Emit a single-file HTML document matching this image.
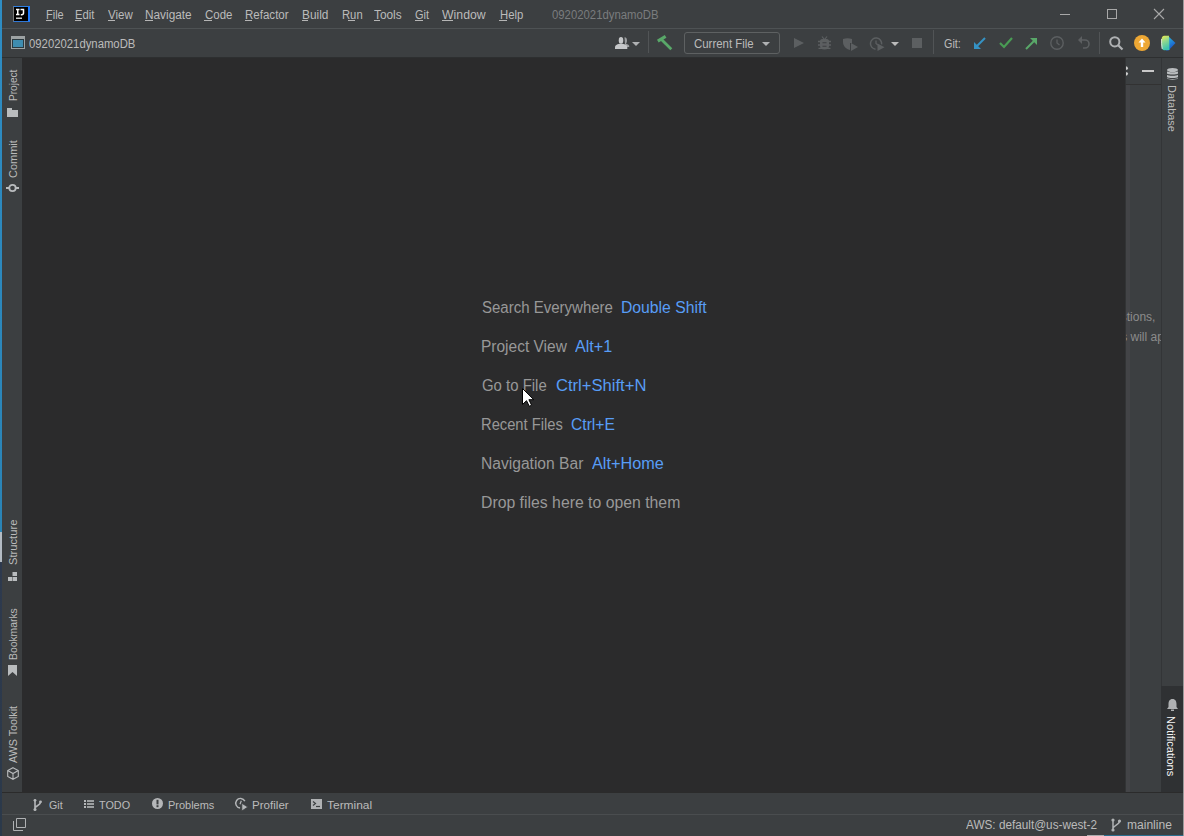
<!DOCTYPE html>
<html><head><meta charset="utf-8">
<style>
*{margin:0;padding:0;box-sizing:border-box}
html,body{width:1184px;height:836px;overflow:hidden;background:#3C3F41;font-family:"Liberation Sans",sans-serif;position:relative}
.a{position:absolute}
.t{position:absolute;white-space:nowrap;line-height:1;transform-origin:0 0}
svg{position:absolute;overflow:visible}
</style></head><body>
<!-- frame -->
<div class="a" style="left:0;top:0;width:1184px;height:28px;background:#3C3F41"></div>
<div class="a" style="left:0;top:28px;width:1184px;height:1px;background:#4E5254"></div>
<div class="a" style="left:0;top:29px;width:1184px;height:28px;background:#3C3F41"></div>
<div class="a" style="left:0;top:57px;width:1184px;height:1px;background:#2D2F30"></div>
<div class="a" style="left:0;top:58px;width:22px;height:734px;background:#3C3F41"></div>
<div class="a" style="left:22px;top:58px;width:1103px;height:734px;background:#2B2B2C"></div>
<div class="a" style="left:1125px;top:58px;width:36px;height:734px;background:#3C3F41"></div>
<div class="a" style="left:1125px;top:58px;width:1px;height:734px;background:#323435"></div>
<div class="a" style="left:1126px;top:85px;width:4px;height:707px;background:#434447"></div>
<div class="a" style="left:1125px;top:84px;width:36px;height:1px;background:#323232"></div>
<div class="a" style="left:1161px;top:58px;width:1px;height:734px;background:#333537"></div>
<div class="a" style="left:1162px;top:58px;width:21px;height:734px;background:#3C3F41"></div>
<div class="a" style="left:1161px;top:686px;width:22px;height:106px;background:#2F3133"></div>
<div class="a" style="left:0;top:792px;width:1184px;height:1px;background:#2B2B2B"></div>
<div class="a" style="left:0;top:793px;width:1184px;height:21px;background:#3C3F41"></div>
<div class="a" style="left:0;top:814px;width:1184px;height:1px;background:#4A4D4F"></div>
<div class="a" style="left:0;top:815px;width:1184px;height:21px;background:#3C3F41"></div>
<div class="a" style="left:0;top:0;width:2px;height:836px;background:linear-gradient(#2E8DC4 0,#2A84B6 532px,#B3BBC3 532px,#B3BBC3 562px,#2E3A4E 562px,#2B394A 836px)"></div>
<div class="a" style="left:1183px;top:0;width:1px;height:836px;background:#9A9A9A"></div>

<div class="a" style="left:1087px;top:835px;width:17px;height:1px;background:#A9ABAD"></div>
<div class="a" style="left:1104px;top:835px;width:79px;height:1px;background:#2C6E8E"></div>
<!-- IJ logo -->
<div class="a" style="left:13px;top:6px;width:17px;height:16px;background:#000;border-right:2px solid #1E7BFF;border-bottom:1px solid #2F78D8;border-top:1px solid #2F7FE0;border-left:1px solid #777"></div>
<svg style="left:15px;top:8px" width="11" height="12" viewBox="0 0 11 12"><path d="M1 1.5H4.5M2.75 1.5V6.5M1 6.5H4.5" stroke="#fff" stroke-width="1.5" fill="none"/><path d="M5.5 1.5H9.2M8.5 1.5V5Q8.5 6.7 6.6 6.7H5.8" stroke="#fff" stroke-width="1.5" fill="none"/><path d="M1 10.2H7" stroke="#fff" stroke-width="1.2"/></svg>
<!-- window controls -->
<div class="a" style="left:1060px;top:14px;width:10px;height:1px;background:#A8A8A8"></div>
<div class="a" style="left:1107px;top:9px;width:10px;height:10px;border:1px solid #A8A8A8"></div>
<svg style="left:1154px;top:9px" width="10" height="10"><path d="M0 0L10 10M10 0L0 10" stroke="#A8A8A8" stroke-width="1.1"/></svg>

<!-- project icon -->
<div class="a" style="left:11px;top:36px;width:14px;height:13px;background:#9DA2A3"></div>
<div class="a" style="left:12px;top:39px;width:12px;height:9px;background:#2B3A40"></div>
<div class="a" style="left:13px;top:40px;width:10px;height:7px;background:#3F8DB0"></div>
<!-- toolbar icons -->
<svg style="left:615px;top:37px" width="15" height="12" viewBox="0 0 15 12"><path d="M9.5 0.2C11.5 0.2 12 2 12 3.5C12 5 11.5 6 11 6.7C13 7.2 14.2 8 14.2 9V10H12L10 7.5Z" fill="#9C9EA0"/><ellipse cx="6" cy="3.4" rx="2.6" ry="3.4" fill="#2F3132"/><ellipse cx="6" cy="3.4" rx="2.3" ry="3.3" fill="#C5C7C9"/><path d="M0 12V10.5C0 8 2.5 6.8 6 6.8S12.3 8 12.3 10.5V12Z" fill="#C5C7C9"/></svg>
<svg style="left:632px;top:42px" width="8" height="4"><path d="M0 0H8L4 4Z" fill="#AFB1B3"/></svg>
<div class="a" style="left:648px;top:31px;width:1px;height:22px;background:#515456"></div>
<svg style="left:657px;top:36px" width="16" height="15" viewBox="0 0 16 15"><path d="M0.8 5.2L8.6 0.4" stroke="#59A869" stroke-width="3.2"/><path d="M4 3L14.3 13.2" stroke="#59A869" stroke-width="2.8"/></svg>
<div class="a" style="left:684px;top:32px;width:96px;height:22px;border:1px solid #5E6162;border-radius:3px"></div>
<svg style="left:762px;top:42px" width="8" height="4"><path d="M0 0H8L4 4Z" fill="#AFB1B3"/></svg>
<svg style="left:794px;top:38px" width="10" height="10"><path d="M0 0L10 5L0 10Z" fill="#5C5F61"/></svg>
<svg style="left:818px;top:36px" width="13" height="14" viewBox="0 0 13 14"><path d="M4 0.5L6 3M9 0.5L7 3" stroke="#5C5F61" stroke-width="1.2"/><path d="M2 5Q2 2.8 6.5 2.8Q11 2.8 11 5V10Q11 13.5 6.5 13.5Q2 13.5 2 10Z" fill="#5C5F61"/><path d="M0 5.5H13M0 9H13M0.5 12.3H12.5" stroke="#5C5F61" stroke-width="1.3"/><path d="M4.5 6.7H8.5M4.5 10.2H8.5" stroke="#3C3F41" stroke-width="1.1"/></svg>
<svg style="left:843px;top:38px" width="15" height="13" viewBox="0 0 15 13"><path d="M0 1C3 0 6 0 9 1V5L7 5V12C3 11 0 8 0 4Z" fill="#5C5F61"/><path d="M8 5L15 9L8 13Z" fill="#5C5F61"/></svg>
<svg style="left:870px;top:37px" width="15" height="14" viewBox="0 0 15 14"><path d="M11.6 7.4A5.6 5.6 0 1 0 5.5 12.2" fill="none" stroke="#5C5F61" stroke-width="1.5"/><path d="M6 3.5V6.5L7.8 8" stroke="#5C5F61" stroke-width="1.3" fill="none"/><path d="M7.5 6.5L14.5 10.3L7.5 14Z" fill="#5C5F61"/></svg>
<svg style="left:891px;top:42px" width="8" height="4"><path d="M0 0H8L4 4Z" fill="#BBBBBB"/></svg>
<div class="a" style="left:912px;top:38px;width:10px;height:10px;background:#5C5F61"></div>
<div class="a" style="left:933px;top:30px;width:1px;height:24px;background:#515456"></div>
<svg style="left:974px;top:37px" width="12" height="12" viewBox="0 0 12 12"><path d="M11 1L3 9" stroke="#3592C4" stroke-width="2"/><path d="M0 5V12H7Z" fill="#3592C4"/></svg>
<svg style="left:999px;top:37px" width="14" height="12" viewBox="0 0 14 12"><path d="M1 6L5 10L13 1" stroke="#499C54" stroke-width="2.2" fill="none"/></svg>
<svg style="left:1025px;top:38px" width="12" height="12" viewBox="0 0 12 12"><path d="M1 11L9 3" stroke="#59A869" stroke-width="2"/><path d="M12 0V7L5 0Z" fill="#59A869"/></svg>
<svg style="left:1050px;top:36px" width="14" height="14" viewBox="0 0 14 14"><circle cx="7" cy="7" r="6.2" fill="none" stroke="#5C5F61" stroke-width="1.4"/><path d="M7 3.5V7L9.5 9" stroke="#5C5F61" stroke-width="1.3" fill="none"/></svg>
<svg style="left:1078px;top:36px" width="12" height="12" viewBox="0 0 12 12"><path d="M1 4H7A4 4 0 0 1 7 12H5" fill="none" stroke="#5C5F61" stroke-width="1.6"/><path d="M4 0V8L0 4Z" fill="#5C5F61"/></svg>
<div class="a" style="left:1099px;top:32px;width:1px;height:22px;background:#515456"></div>
<svg style="left:1109px;top:36px" width="15" height="15" viewBox="0 0 15 15"><circle cx="5.8" cy="5.8" r="4.6" fill="none" stroke="#AFB1B3" stroke-width="2"/><path d="M9 9L13.5 13.5" stroke="#AFB1B3" stroke-width="2.2"/></svg>
<svg style="left:1134px;top:35px" width="16" height="16" viewBox="0 0 16 16"><circle cx="8" cy="8" r="8" fill="#EDA734"/><path d="M8 3.5L11.5 7.5H9.2V12H6.8V7.5H4.5Z" fill="#fff"/></svg>
<svg style="left:1161px;top:35px" width="15" height="16" viewBox="0 0 15 16"><defs><linearGradient id="jb1" x1="0" y1="0" x2="0.3" y2="1"><stop offset="0" stop-color="#F2EC4C"/><stop offset="0.45" stop-color="#93D88C"/><stop offset="1" stop-color="#3CC3B0"/></linearGradient><linearGradient id="jb2" x1="0" y1="0" x2="0.4" y2="1"><stop offset="0" stop-color="#2CC0D8"/><stop offset="0.6" stop-color="#1F7FD6"/><stop offset="1" stop-color="#1A4FC4"/></linearGradient></defs><path d="M7 1L14.5 8L7.5 15.5L5 15.5Z" fill="url(#jb2)"/><path d="M3 0.8L8 0.8L8.5 15L3 15.2Q0.2 15.2 0.2 8Q0.2 0.8 3 0.8Z" fill="url(#jb1)"/><path d="M0.6 4Q0.3 8 1.2 14" stroke="#EDEDED" stroke-width="0.8" fill="none"/></svg>

<!-- right panel header icons -->
<div class="a" style="left:1142px;top:70px;width:12px;height:2px;background:#C8C8C8"></div>
<svg style="left:1126px;top:66px" width="3" height="10" viewBox="0 0 3 10"><path d="M0 0.5H1L2.2 2.3L1.2 3.8H0Z" fill="#D0D0D0"/><path d="M0 6.2H1.2L2.2 7.7L1 9.5H0Z" fill="#D0D0D0"/></svg>
<!-- right panel text -->
<div class="a" style="left:1126px;top:300px;width:35px;height:50px;overflow:hidden">
  <div class="t" style="left:-5.3px;top:10.8px;font-size:12px;color:#8C8C8C">stions,</div>
  <div class="t" style="left:-4.8px;top:30.8px;font-size:12px;color:#8C8C8C">s will ap</div>
</div>

<!-- left stripe icons -->
<svg style="left:7px;top:108px" width="11" height="9"><path d="M0 0H5V2H11V9H0Z" fill="#B9BCBE"/></svg>
<svg style="left:6px;top:183px" width="13" height="10" viewBox="0 0 13 10"><circle cx="6.5" cy="5" r="3.2" fill="none" stroke="#B9BCBE" stroke-width="1.8"/><path d="M0 5H3M10 5H13" stroke="#B9BCBE" stroke-width="1.8"/></svg>
<svg style="left:8px;top:572px" width="9" height="9"><rect x="4.5" y="0" width="4.5" height="4" fill="#B9BCBE"/><rect x="0" y="5" width="4" height="4" fill="#B9BCBE"/><rect x="4.5" y="5" width="4.5" height="4" fill="#B9BCBE"/></svg>
<svg style="left:8px;top:665px" width="9" height="11"><path d="M0 0H9V11L4.5 7L0 11Z" fill="#B9BCBE"/></svg>
<svg style="left:7px;top:767px" width="12" height="13" viewBox="0 0 12 13"><path d="M6 0.7L11.3 3.5V9.5L6 12.3L0.7 9.5V3.5Z M0.7 3.5L6 6.5L11.3 3.5 M6 6.5V12.3" fill="none" stroke="#B9BBBD" stroke-width="1.1"/></svg>

<!-- right stripe icons -->
<svg style="left:1167px;top:68px" width="11" height="12" viewBox="0 0 11 12"><ellipse cx="5.5" cy="2" rx="5.5" ry="2" fill="#B9BCBE"/><path d="M0 3.2C1 4.5 10 4.5 11 3.2V5.5C10 6.8 1 6.8 0 5.5Z" fill="#B9BCBE"/><path d="M0 6.7C1 8 10 8 11 6.7V9C10 10.3 1 10.3 0 9Z" fill="#B9BCBE"/><path d="M0 10C1 11.3 10 11.3 11 10V10.5C10 12 1 12 0 10.5Z" fill="#B9BCBE"/></svg>
<svg style="left:1167px;top:699px" width="11" height="12" viewBox="0 0 11 12"><path d="M5.5 0C8.5 0 9.5 2.5 9.5 5V8L11 10H0L1.5 8V5C1.5 2.5 2.5 0 5.5 0Z" fill="#AFB1B3"/><path d="M4 10.5H7V12H4Z" fill="#AFB1B3"/></svg>

<!-- bottom stripe icons -->
<svg style="left:33px;top:799px" width="10" height="12" viewBox="0 0 10 12"><circle cx="2" cy="1.3" r="1.4" fill="#B5B7B9"/><circle cx="2" cy="10.6" r="1.5" fill="#B5B7B9"/><circle cx="7.5" cy="2.8" r="1.4" fill="#B5B7B9"/><path d="M2 1.3V10.6M7.5 2.8C7.5 6.5 3 6.5 2 8.8" stroke="#B5B7B9" stroke-width="1.6" fill="none"/></svg>
<svg style="left:84px;top:800px" width="11" height="9"><rect x="0" y="0" width="2" height="2" fill="#B5B7B9"/><rect x="3" y="0.2" width="7" height="1.6" fill="#B5B7B9"/><rect x="0" y="3" width="2" height="2" fill="#B5B7B9"/><rect x="3" y="3.2" width="7" height="1.6" fill="#B5B7B9"/><rect x="0" y="6" width="2" height="2" fill="#B5B7B9"/><rect x="3" y="6.2" width="7" height="1.6" fill="#B5B7B9"/></svg>
<svg style="left:152px;top:798px" width="11" height="11" viewBox="0 0 11 11"><circle cx="5.5" cy="5.5" r="5.5" fill="#B5B7B9"/><rect x="4.5" y="1.8" width="2" height="4.6" fill="#3C3F41"/><rect x="4.5" y="7.2" width="2" height="2" fill="#3C3F41"/></svg>
<svg style="left:235px;top:798px" width="13" height="13" viewBox="0 0 13 13"><path d="M9.85 3.1A4.8 4.8 0 1 0 5.1 10" fill="none" stroke="#B5B7B9" stroke-width="1.4"/><path d="M6.3 2.8L5 6.3" stroke="#B5B7B9" stroke-width="1.2" fill="none"/><path d="M6.8 5.2L12.8 9.1L6.8 13Z" fill="#B5B7B9" stroke="#3C3F41" stroke-width="0.8"/></svg>
<svg style="left:311px;top:799px" width="11" height="10" viewBox="0 0 11 10"><rect width="11" height="10" fill="#AFB1B3"/><path d="M2 2.5L4.5 4.5L2 6.5" stroke="#3C3F41" stroke-width="1.2" fill="none"/><path d="M5 7.5H9" stroke="#3C3F41" stroke-width="1.2"/></svg>

<!-- status bar -->
<svg style="left:13px;top:818px" width="13" height="13" viewBox="0 0 13 13"><path d="M3.5 0.5H12.5V9.5H3.5Z" fill="none" stroke="#AFB1B3" stroke-width="1"/><path d="M0.5 3V12.5H10" fill="none" stroke="#AFB1B3" stroke-width="1"/></svg>
<svg style="left:1111px;top:818px" width="10" height="14" viewBox="0 0 10 14"><circle cx="2" cy="2" r="1.6" fill="#AFB1B3"/><circle cx="2" cy="12" r="1.6" fill="#AFB1B3"/><circle cx="8.5" cy="3" r="1.6" fill="#AFB1B3"/><path d="M2 2V12M8.5 3C8.5 7 2.5 7 2 10.5" stroke="#AFB1B3" stroke-width="1.5" fill="none"/></svg>

<div class="a" style="left:46px;top:20px;width:6px;height:1px;background:#B5B5B5"></div><div class="a" style="left:75px;top:20px;width:6px;height:1px;background:#B5B5B5"></div><div class="a" style="left:108px;top:20px;width:7px;height:1px;background:#B5B5B5"></div><div class="a" style="left:145px;top:20px;width:8px;height:1px;background:#B5B5B5"></div><div class="a" style="left:204px;top:20px;width:8px;height:1px;background:#B5B5B5"></div><div class="a" style="left:245px;top:20px;width:7px;height:1px;background:#B5B5B5"></div><div class="a" style="left:302px;top:20px;width:6px;height:1px;background:#B5B5B5"></div><div class="a" style="left:348px;top:20px;width:7px;height:1px;background:#B5B5B5"></div><div class="a" style="left:374px;top:20px;width:6px;height:1px;background:#B5B5B5"></div><div class="a" style="left:415px;top:20px;width:8px;height:1px;background:#B5B5B5"></div><div class="a" style="left:442px;top:20px;width:11px;height:1px;background:#B5B5B5"></div><div class="a" style="left:499px;top:20px;width:8px;height:1px;background:#B5B5B5"></div>
<div class="t" style="left:46px;top:9px;font-size:12px;color:#BBBBBB;transform:scaleX(0.9155)">File</div>
<div class="t" style="left:75px;top:9px;font-size:12px;color:#BBBBBB;transform:scaleX(0.9370)">Edit</div>
<div class="t" style="left:108px;top:9px;font-size:12px;color:#BBBBBB;transform:scaleX(0.9569)">View</div>
<div class="t" style="left:145px;top:9px;font-size:12px;color:#BBBBBB;transform:scaleX(0.9856)">Navigate</div>
<div class="t" style="left:204.5px;top:9px;font-size:12px;color:#BBBBBB;transform:scaleX(0.9547)">Code</div>
<div class="t" style="left:245.3px;top:9px;font-size:12px;color:#BBBBBB;transform:scaleX(0.9613)">Refactor</div>
<div class="t" style="left:302.4px;top:9px;font-size:12px;color:#BBBBBB;transform:scaleX(0.9881)">Build</div>
<div class="t" style="left:341.8px;top:9px;font-size:12px;color:#BBBBBB;transform:scaleX(0.9372)">Run</div>
<div class="t" style="left:374.2px;top:9px;font-size:12px;color:#BBBBBB;transform:scaleX(0.9852)">Tools</div>
<div class="t" style="left:415.3px;top:9px;font-size:12px;color:#BBBBBB;transform:scaleX(0.9125)">Git</div>
<div class="t" style="left:442px;top:9px;font-size:12px;color:#BBBBBB;transform:scaleX(1.0229)">Window</div>
<div class="t" style="left:499.5px;top:9px;font-size:12px;color:#BBBBBB;transform:scaleX(0.9438)">Help</div>
<div class="t" style="left:552px;top:9px;font-size:12px;color:#7A7C7E;transform:scaleX(0.9446)">09202021dynamoDB</div>
<div class="t" style="left:29.3px;top:38px;font-size:12px;color:#BBBBBB;transform:scaleX(0.9437)">09202021dynamoDB</div>
<div class="t" style="left:694px;top:38px;font-size:12px;color:#BBBBBB;transform:scaleX(0.9522)">Current File</div>
<div class="t" style="left:944px;top:38px;font-size:12px;color:#BBBBBB;transform:scaleX(0.9000)">Git:</div>
<div class="t" style="left:481.6px;top:300px;font-size:16px;color:#989898;transform:scaleX(0.9376)">Search Everywhere</div>
<div class="t" style="left:620.62px;top:300px;font-size:16px;color:#589DF6;transform:scaleX(0.9836)">Double Shift</div>
<div class="t" style="left:480.63px;top:339px;font-size:16px;color:#989898;transform:scaleX(0.9685)">Project View</div>
<div class="t" style="left:575.2px;top:339px;font-size:16px;color:#589DF6;transform:scaleX(1.0077)">Alt+1</div>
<div class="t" style="left:481.6px;top:378px;font-size:16px;color:#989898;transform:scaleX(0.9329)">Go to File</div>
<div class="t" style="left:555.5px;top:378px;font-size:16px;color:#589DF6;transform:scaleX(1.0371)">Ctrl+Shift+N</div>
<div class="t" style="left:480.68px;top:417px;font-size:16px;color:#989898;transform:scaleX(0.9201)">Recent Files</div>
<div class="t" style="left:571.4px;top:417px;font-size:16px;color:#589DF6;transform:scaleX(0.9768)">Ctrl+E</div>
<div class="t" style="left:480.63px;top:456px;font-size:16px;color:#989898;transform:scaleX(0.9750)">Navigation Bar</div>
<div class="t" style="left:592px;top:456px;font-size:16px;color:#589DF6;transform:scaleX(1.0142)">Alt+Home</div>
<div class="t" style="left:480.61px;top:495px;font-size:16px;color:#989898;transform:scaleX(0.9872)">Drop files here to open them</div>
<div class="t" style="left:49px;top:800px;font-size:11.5px;color:#BBBBBB;transform:scaleX(0.9290)">Git</div>
<div class="t" style="left:99.3px;top:800px;font-size:11.5px;color:#BBBBBB;transform:scaleX(0.9435)">TODO</div>
<div class="t" style="left:168.1px;top:800px;font-size:11.5px;color:#BBBBBB;transform:scaleX(0.9545)">Problems</div>
<div class="t" style="left:252.2px;top:800px;font-size:11.5px;color:#BBBBBB;transform:scaleX(1.0083)">Profiler</div>
<div class="t" style="left:326.6px;top:800px;font-size:11.5px;color:#BBBBBB;transform:scaleX(1.0396)">Terminal</div>
<div class="t" style="left:965.8px;top:819px;font-size:12px;color:#BBBBBB;transform:scaleX(0.9798)">AWS: default@us-west-2</div>
<div class="t" style="left:1126.5px;top:819px;font-size:12px;color:#BBBBBB;transform:scaleX(1.0041)">mainline</div>
<div class="t" style="left:8.03px;top:101px;font-size:11.5px;color:#BBBBBB;transform:rotate(-90deg) scaleX(0.8744)">Project</div>
<div class="t" style="left:8.03px;top:177.5px;font-size:11.5px;color:#BBBBBB;transform:rotate(-90deg) scaleX(0.9526)">Commit</div>
<div class="t" style="left:8.12px;top:565.4px;font-size:11.5px;color:#BBBBBB;transform:rotate(-90deg) scaleX(0.9727)">Structure</div>
<div class="t" style="left:8.12px;top:659.5px;font-size:11.5px;color:#BBBBBB;transform:rotate(-90deg) scaleX(0.9002)">Bookmarks</div>
<div class="t" style="left:8.03px;top:763px;font-size:11.5px;color:#BBBBBB;transform:rotate(-90deg) scaleX(0.9300)">AWS Toolkit</div>
<div class="t" style="left:1176.78px;top:85.2px;font-size:11.5px;color:#BBBBBB;transform:rotate(90deg) scaleX(0.9522)">Database</div>
<div class="t" style="left:1176.38px;top:715.5px;font-size:11.5px;color:#F4F4F4;transform:rotate(90deg) scaleX(0.9620)">Notifications</div>
<!-- cursor -->
<svg style="left:522px;top:388px" width="13" height="19" viewBox="0 0 13 19"><path d="M0.5 0.5V16.5L4.5 12.7L7.3 18.3L9.6 17.2L6.9 11.7H11.8Z" fill="#fff" stroke="#000" stroke-width="1" stroke-linejoin="miter"/></svg>


</body></html>
